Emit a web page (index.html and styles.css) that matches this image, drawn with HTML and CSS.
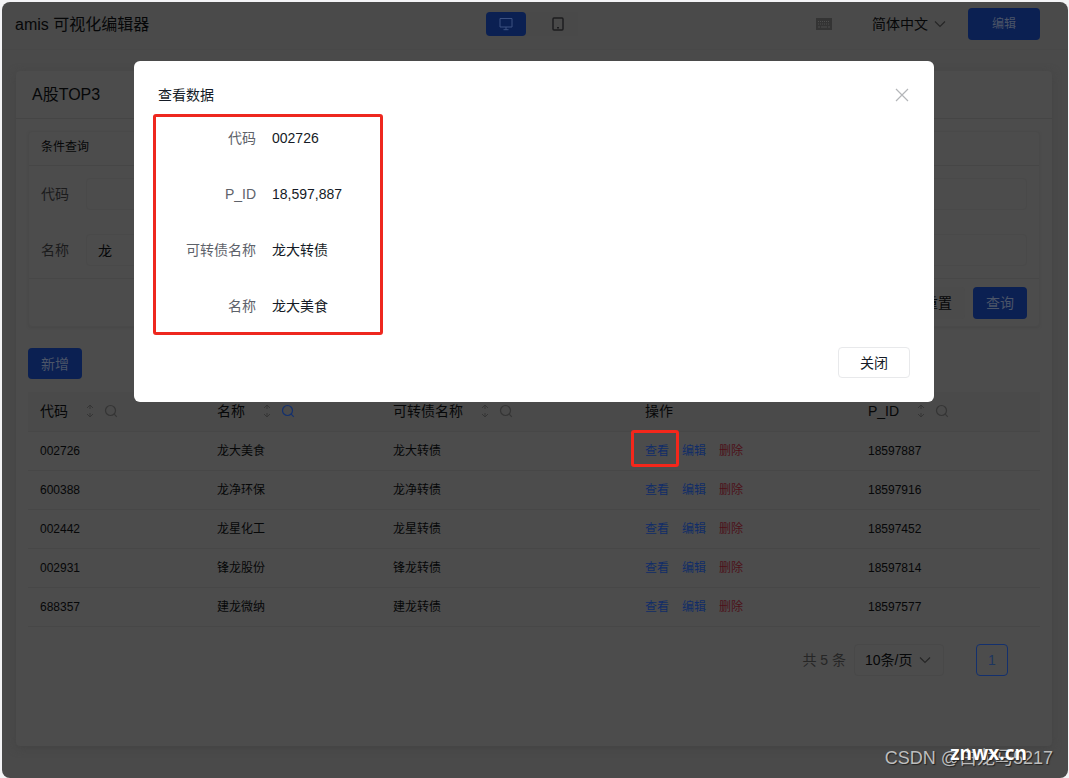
FILE: index.html
```html
<!DOCTYPE html>
<html lang="zh-CN">
<head>
<meta charset="utf-8">
<title>amis 可视化编辑器</title>
<link rel="stylesheet" href="styles.css">
</head>
<body>
<svg class="defs" aria-hidden="true">
  <symbol id="sort" viewBox="0 0 12 14"><path d="M6 1v4M3 4l3-3 3 3M6 9v4M3 10l3 3 3-3" fill="none" stroke="currentColor"/></symbol>
  <symbol id="search" viewBox="0 0 14 14"><circle cx="6.5" cy="6.5" r="5" fill="none" stroke="currentColor" stroke-width="1.2"/><path d="M10.2 10.2l2.6 2.6" stroke="currentColor" stroke-width="1.2"/></symbol>
  <symbol id="chevron" viewBox="0 0 12 12"><path d="M1 3.5l5 5 5-5" fill="none" stroke="currentColor" stroke-width="1.2"/></symbol>
</svg>
<div class="app">
  <header class="topbar">
    <h1 class="brand">amis 可视化编辑器</h1>
    <div class="devices">
      <button class="device device-on" aria-label="桌面"><svg width="14" height="14" viewBox="0 0 14 14" fill="none" stroke="currentColor"><path d="M1 1.5h12v8.500H1zM7 10v3M4.500 12.700h5"/></svg></button>
      <button class="device" aria-label="移动"><svg width="12" height="14" viewBox="0 0 12 14" fill="none" stroke="currentColor" stroke-width="1.400"><rect x="1" y="1" width="10" height="12" rx="1"/><path d="M5 10.700h2"/></svg></button>
    </div>
    <div class="tools">
      <button class="keyboard" aria-label="快捷键"><svg width="16" height="12" viewBox="0 0 16 12"><path d="M0 0h16v12H0z" fill="currentColor"/><path d="M2 3.500h12M2 6h12" stroke="#bbb" stroke-dasharray="1 1"/><path d="M2 9h2m1 0h6m1 0h2" stroke="#bbb"/></svg></button>
      <label class="select lang"><select aria-label="语言"><option>简体中文</option></select><svg width="12" height="12"><use href="#chevron"/></svg></label>
      <button class="btn btn-edit">编辑</button>
    </div>
  </header>

  <main class="card">
    <h2 class="card-title">A股TOP3</h2>
    <div class="card-body">
      <form class="query">
        <h3 class="query-title">条件查询</h3>
        <div class="query-fields">
          <div class="field"><label for="code">代码</label><input id="code" type="text"></div>
          <div class="field"><label for="name">名称</label><input id="name" type="text" value="龙"></div>
        </div>
        <div class="query-actions">
          <button class="btn btn-plain" type="reset">重置</button>
          <button class="btn" type="button">查询</button>
        </div>
      </form>
      <button class="btn btn-add">新增</button>
      <table class="grid">
        <colgroup><col class="c1"><col class="c2"><col class="c3"><col class="c4"><col class="c5"></colgroup>
        <thead><tr>
          <th><div class="head">代码<span class="marks"><svg width="12" height="14"><use href="#sort"/></svg><svg width="14" height="14"><use href="#search"/></svg></span></div></th>
          <th><div class="head">名称<span class="marks"><svg width="12" height="14"><use href="#sort"/></svg><svg class="active" width="14" height="14"><use href="#search"/></svg></span></div></th>
          <th><div class="head">可转债名称<span class="marks"><svg width="12" height="14"><use href="#sort"/></svg><svg width="14" height="14"><use href="#search"/></svg></span></div></th>
          <th><div class="head">操作</div></th>
          <th><div class="head">P_ID<span class="marks"><svg width="12" height="14"><use href="#sort"/></svg><svg width="14" height="14"><use href="#search"/></svg></span></div></th>
        </tr></thead>
        <tbody>
          <tr><td>002726</td><td>龙大美食</td><td>龙大转债</td><td><div class="ops"><a class="marked" href="#">查看</a><a href="#">编辑</a><a class="del" href="#">删除</a></div></td><td>18597887</td></tr>
          <tr><td>600388</td><td>龙净环保</td><td>龙净转债</td><td><div class="ops"><a href="#">查看</a><a href="#">编辑</a><a class="del" href="#">删除</a></div></td><td>18597916</td></tr>
          <tr><td>002442</td><td>龙星化工</td><td>龙星转债</td><td><div class="ops"><a href="#">查看</a><a href="#">编辑</a><a class="del" href="#">删除</a></div></td><td>18597452</td></tr>
          <tr><td>002931</td><td>锋龙股份</td><td>锋龙转债</td><td><div class="ops"><a href="#">查看</a><a href="#">编辑</a><a class="del" href="#">删除</a></div></td><td>18597814</td></tr>
          <tr><td>688357</td><td>建龙微纳</td><td>建龙转债</td><td><div class="ops"><a href="#">查看</a><a href="#">编辑</a><a class="del" href="#">删除</a></div></td><td>18597577</td></tr>
        </tbody>
      </table>
      <div class="pager">
        <span class="total">共 5 条</span>
        <label class="select size"><select aria-label="每页条数"><option>10条/页</option></select><svg width="12" height="12"><use href="#chevron"/></svg></label>
        <button class="page">1</button>
      </div>
    </div>
  </main>
</div>

<div class="overlay">
  <section class="dialog" role="dialog" aria-labelledby="dialog-title">
    <header class="dialog-head">
      <h2 id="dialog-title">查看数据</h2>
      <button class="close" aria-label="关闭窗口"><svg width="14" height="14" viewBox="0 0 14 14"><path d="M1 1l12 12M13 1L1 13" stroke="currentColor" stroke-width="1.200"/></svg></button>
    </header>
    <dl class="details">
      <dt>代码</dt><dd>002726</dd>
      <dt>P_ID</dt><dd>18,597,887</dd>
      <dt>可转债名称</dt><dd>龙大转债</dd>
      <dt>名称</dt><dd>龙大美食</dd>
    </dl>
    <footer class="dialog-foot"><button class="btn-close">关闭</button></footer>
  </section>
</div>
<div class="watermark">CSDN @白龙马5217<strong>znwx.cn</strong></div>
</body>
</html>
```
FILE: styles.css
```css
* { box-sizing: border-box; }
body {
  margin: 0;
  background: #f4f4f6;
  color: #060708;
  font: 14px/20px "Liberation Sans", "Noto Sans CJK SC", sans-serif;
}
h1, h2, h3, dl, dd { margin: 0; font-weight: 400; }
button, input, select { font: inherit; color: inherit; border: 0; background: none; padding: 0; }
a { color: #112d68; text-decoration: none; }
svg { display: block; flex: none; }
.defs { position: absolute; width: 0; height: 0; }

.app {
  min-height: calc(100vh - 2px);
  margin: 2px 1px 0 2px;
  padding-bottom: 32px;
  border-radius: 8px;
  background: #4a4a4a;
  display: flex;
  flex-direction: column;
}
.topbar {
  display: grid;
  grid-template-columns: 1fr auto 1fr;
  align-items: center;
  height: 48px;
  padding: 0 28px 4px 13px;
  border-bottom: 1px solid #484848;
}
.brand { font-size: 16px; line-height: 24px; padding-top: 2px; }
.devices { display: flex; gap: 12px; margin-left: 8px; background: #494949; }
.device { width: 40px; height: 24px; border-radius: 4px; display: grid; place-items: center; color: #1c1c1e; }
.device-on { background: #0b2052; color: #3c5080; }
.tools { display: flex; align-items: center; justify-content: flex-end; }
.keyboard { color: #343434; margin-right: 40px; }
.keyboard path { stroke-opacity: .2; }
.select { display: flex; align-items: center; gap: 6px; color: #060708; }
.select select { appearance: none; }
.select svg { color: #262626; }
.lang { margin-right: 22px; }
.btn {
  width: 54px;
  height: 32px;
  border-radius: 4px;
  background: #0b2052;
  color: #4c5568;
}
.btn-edit { width: 72px; font-size: 12px; }
.btn-plain { background: #4b4b4b; color: #060708; }

.card {
  flex: 1;
  margin: 21px 16px 0 14px;
  background: #4c4c4c;
  border-radius: 4px;
  box-shadow: 0 2px 8px #434343;
}
.card-title { padding: 12px 16px 11px; font-size: 16px; line-height: 24px; border-bottom: 1px solid #454545; }
.card-body { padding: 12px; }
.query { border: 1px solid #494949; border-radius: 4px; margin-bottom: 21px; box-shadow: 0 1px 2px #474747; }
.query-title { padding: 5px 12px 8px; height: 34px; font-size: 12px; border-bottom: 1px solid #464646; }
.query-fields { display: grid; gap: 24px; padding: 12px; border-bottom: 1px solid #474747; }
.field { display: flex; align-items: center; gap: 17px; color: #1b1b1c; }
.field input { flex: 1; height: 32px; padding: 0 11px; border: 1px solid #494949; border-radius: 4px; color: #060708; }
.query-actions { display: flex; justify-content: flex-end; gap: 8px; padding: 8px 12px 7px; }
.btn-add { display: block; height: 31px; }

.grid { width: 100%; table-layout: fixed; border-collapse: collapse; font-size: 12px; margin-top: 13px; }
.c1 { width: 177px; }
.c2 { width: 176px; }
.c3 { width: 252px; }
.c4 { width: 223px; }
.grid th, .grid td { height: 39px; padding: 0 12px; text-align: left; font-weight: 400; border-bottom: 1px solid #474747; }
.grid th { font-size: 14px; background: #4a4a4a; }
.head, .marks { display: flex; align-items: center; }
.head { gap: 16px; }
.marks { gap: 8px; color: #353535; }
.marks .active { color: #13306e; }
.ops { display: flex; gap: 13px; }
.ops .del { color: #4d1119; }
.marked { position: relative; }
.marked::after { content: ""; position: absolute; inset: -11px -10px -6px -14px; border: 3px solid #f5271b; border-radius: 3px; z-index: 3; }
.pager { display: flex; align-items: center; justify-content: flex-end; padding: 17px 32px 0 0; }
.total { color: #262626; margin-right: 8px; }
.size { height: 32px; padding: 0 12px 0 10px; border: 1px solid #484848; border-radius: 4px; }
.page { width: 32px; height: 32px; margin-left: 32px; border: 1px solid #13306e; border-radius: 4px; color: #1c355f; }

.overlay { position: absolute; inset: 61px 0 auto; display: flex; justify-content: center; padding: 0 17px 0 16px; }
.dialog { width: 800px; background: #fff; border-radius: 6px; padding: 24px; color: #151b26; }
.dialog-head { display: flex; align-items: center; justify-content: space-between; height: 20px; }
.dialog-head h2 { font-size: 14px; }
.close { color: #b4b6b9; margin-right: 1px; }
.details {
  display: grid;
  grid-template-columns: 100px auto;
  gap: 36px 16px;
  width: 230px;
  margin: 9px 0 0 -5px;
  padding: 11px 0 16px;
  border: 3px solid #ee281f;
  border-radius: 3px;
}
.details dt { text-align: right; color: #5e626a; }
.dialog-foot { display: flex; justify-content: flex-end; margin-top: 12px; }
.btn-close { width: 72px; height: 31px; border: 1px solid #e8e9eb; border-radius: 4px; background: #fff; }

.watermark { position: absolute; right: 16px; bottom: 8px; font-size: 18px; line-height: 24px; color: #bdbdbd; text-shadow: 1px 1px 1px #222; }
.watermark strong { position: absolute; right: 26px; bottom: 5px; font: 700 19px/24px "Open Sans", sans-serif; color: #fff; }
```
